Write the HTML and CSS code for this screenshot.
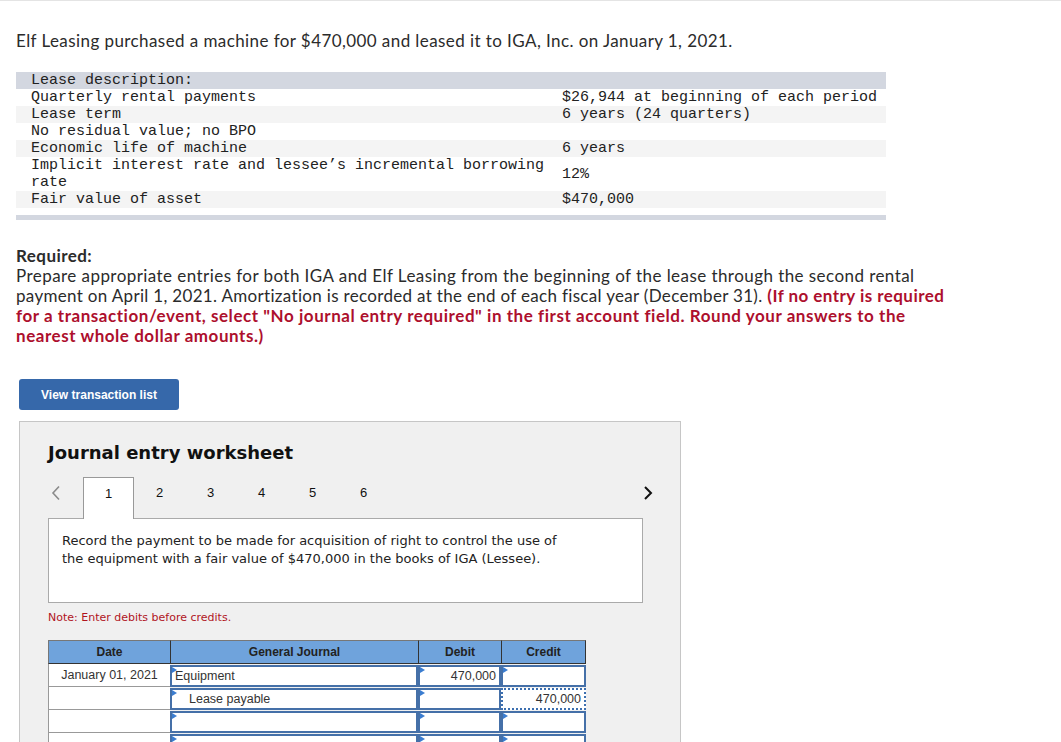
FILE: index.html
```html
<!DOCTYPE html>
<html>
<head>
<meta charset="utf-8">
<link rel="stylesheet" href="styles.css">
</head>
<body>
<div class="page">
  <p class="intro">Elf Leasing purchased a machine for $470,000 and leased it to IGA, Inc. on January 1, 2021.</p>

  <div class="lease">
    <div class="lrow head"><div class="lab">Lease description:</div><div class="val"></div></div>
    <div class="lrow"><div class="lab">Quarterly rental payments</div><div class="val">$26,944 at beginning of each period</div></div>
    <div class="lrow alt"><div class="lab">Lease term</div><div class="val">6 years (24 quarters)</div></div>
    <div class="lrow"><div class="lab">No residual value; no BPO</div><div class="val"></div></div>
    <div class="lrow alt"><div class="lab">Economic life of machine</div><div class="val">6 years</div></div>
    <div class="lrow"><div class="lab">Implicit interest rate and lessee’s incremental borrowing rate</div><div class="val">12%</div></div>
    <div class="lrow alt"><div class="lab">Fair value of asset</div><div class="val">$470,000</div></div>
    <div class="lbar"></div>
  </div>

  <div class="req">
    <div class="req-h">Required:</div>
    <div>Prepare appropriate entries for both IGA and Elf Leasing from the beginning of the lease through the second rental<br><span class="tight">payment on April 1, 2021. Amortization is recorded at the end of each fiscal year (December 31).</span> <b class="red tight2">(If no entry is required</b><br><b class="red">for a transaction/event, select "No journal entry required" in the first account field. Round your answers to the<br>nearest whole dollar amounts.)</b></div>
  </div>

  <button class="vbtn">View transaction list</button>

  <div class="ws">
    <div class="ws-title">Journal entry worksheet</div>
    <div class="tabs">
      <span class="arr left">
        <svg width="10" height="16" viewBox="0 0 10 16"><path d="M8 1.5 L2 8 L8 14.5" fill="none" stroke="#8a8a8a" stroke-width="1.6"/></svg>
      </span>
      <span class="tab active">1</span>
      <span class="tab">2</span>
      <span class="tab">3</span>
      <span class="tab">4</span>
      <span class="tab">5</span>
      <span class="tab">6</span>
      <span class="arr right">
        <svg width="10" height="16" viewBox="0 0 10 16"><path d="M2 2 L8 8 L2 14" fill="none" stroke="#111" stroke-width="2"/></svg>
      </span>
    </div>
    <div class="ws-box">Record the payment to be made for acquisition of right to control the use of<br>the equipment with a fair value of $470,000 in the books of IGA (Lessee).</div>
    <div class="note">Note: Enter debits before credits.</div>

    <div class="jt">
      <div class="jh first">Date</div>
      <div class="jh">General Journal</div>
      <div class="jh">Debit</div>
      <div class="jh last">Credit</div>

      <div class="jd">January 01, 2021</div>
      <div class="ji">Equipment</div>
      <div class="ji num">470,000</div>
      <div class="ji num"></div>

      <div class="jd"></div>
      <div class="ji indent">Lease payable</div>
      <div class="ji num"></div>
      <div class="ji num focus">470,000</div>

      <div class="jd"></div>
      <div class="ji"></div>
      <div class="ji"></div>
      <div class="ji"></div>

      <div class="jd"></div>
      <div class="ji"></div>
      <div class="ji"></div>
      <div class="ji"></div>
    </div>
  </div>
</div>
</body>
</html>
```

FILE: styles.css
```css
html, body {
  margin: 0;
  padding: 0;
  background: #fff;
}
body {
  border-top: 1px solid #e4e4e4;
  font-family: "Lato", "Liberation Sans", sans-serif;
  color: #2b2b2b;
  overflow: hidden;
  height: 741px;
}
.page {
  padding-left: 16px;
}
.intro {
  margin: 0;
  padding-top: 30px;
  font-size: 17px;
  line-height: 20px;
  letter-spacing: 0.42px;
}
.lease {
  margin-top: 21px;
  width: 870px;
  font-family: "Liberation Mono", monospace;
  font-size: 15px;
  line-height: 17px;
  color: #222;
}
.lrow {
  display: grid;
  grid-template-columns: 547px 1fr;
  align-items: center;
  background: #fff;
}
.lrow.alt { background: #f4f4f4; }
.lrow.head { background: #d3d7e0; }
.lab {
  padding-left: 15px;
  padding-right: 8px;
}
.val { margin-left: -1px; }
.lbar {
  margin-top: 7px;
  height: 5px;
  background: #d3d7e0;
}
.req {
  margin-top: 26px;
  font-size: 17px;
  line-height: 20px;
  white-space: nowrap;
  letter-spacing: 0.44px;
}
.req-h { font-weight: 700; }
.red { color: #ad0f2d; font-weight: 700; letter-spacing: 0.55px; }
.tight { letter-spacing: 0.32px; }
.tight2 { letter-spacing: 0.45px; }

.vbtn {
  display: block;
  margin: 33px 0 0 3px;
  width: 160px;
  height: 31px;
  border: 0;
  border-radius: 3px;
  background: #3668aa;
  color: #fff;
  font-family: "Liberation Sans", Arial, sans-serif;
  font-weight: 700;
  font-size: 12px;
  padding: 0;
}

.ws {
  margin: 11px 0 0 3px;
  width: 662px;
  height: 400px;
  background: #f0f0f0;
  border: 1px solid #c6c6c6;
  padding-left: 28px;
  box-sizing: border-box;
  font-family: "Liberation Sans", Arial, sans-serif;
}
.ws-title {
  padding-top: 19px;
  font-family: "DejaVu Sans", sans-serif;
  font-weight: 700;
  font-size: 18px;
  line-height: 24px;
  color: #111;
}
.tabs {
  margin-top: 12px;
  display: flex;
  align-items: stretch;
  height: 41px;
  width: 605px;
}
.arr {
  display: flex;
  align-items: center;
  height: 32px;
}
.arr.left { width: 35px; padding-left: 3px; box-sizing: border-box; }
.arr.right { margin-left: auto; }
.tab {
  width: 51px;
  text-align: center;
  font-size: 13px;
  line-height: 32px;
  color: #111;
  box-sizing: border-box;
}
.tab.active {
  background: #fff;
  border: 1px solid #999;
  border-bottom: 0;
  height: 42px;
  position: relative;
  z-index: 1;
}
.ws-box {
  width: 595px;
  height: 85px;
  box-sizing: border-box;
  background: #fff;
  border: 1px solid #aaa;
  padding: 13px 0 0 13px;
  font-family: "DejaVu Sans", sans-serif;
  font-size: 13px;
  line-height: 18px;
  color: #222;
}
.note {
  margin-top: 8px;
  font-family: "DejaVu Sans", sans-serif;
  font-size: 11px;
  line-height: 14px;
  color: #b0141e;
}
.jt {
  margin-top: 15px;
  display: grid;
  grid-template-columns: 122px 248px 83px 85px;
  grid-template-rows: 24px;
  grid-auto-rows: 23px;
  font-size: 12.5px;
  color: #333;
}
.jh {
  height: 24px;
  background: #6fa3dc;
  border-top: 1px solid #777;
  border-left: 1px solid #333;
  border-bottom: 1px solid #333;
  box-sizing: border-box;
  text-align: center;
  font-weight: 700;
  font-size: 12px;
  line-height: 22px;
  color: #222;
}
.jh.first { border-left: 1px solid #777; }
.jh.last { border-right: 1px solid #333; }
.jd {
  background: #fff;
  border-left: 1px solid #999;
  border-bottom: 1px solid #999;
  box-sizing: border-box;
  text-align: center;
  line-height: 22px;
}
.ji {
  position: relative;
  background: #fff;
  border: 2px solid #4570a8;
  box-sizing: border-box;
  line-height: 19px;
  padding: 0 3px;
  margin-top: 1px;
  height: 22px;
}
.ji::before {
  content: "";
  position: absolute;
  left: 0;
  top: 0;
  border-top: 3px solid transparent;
  border-bottom: 3px solid transparent;
  border-left: 5px solid #3b7dd0;
}
.ji.num { text-align: right; }
.ji.indent { padding-left: 17px; }
.ji.focus {
  border: 2px dotted #3c6fb0;
}
.ji.focus::before { display: none; }
```
